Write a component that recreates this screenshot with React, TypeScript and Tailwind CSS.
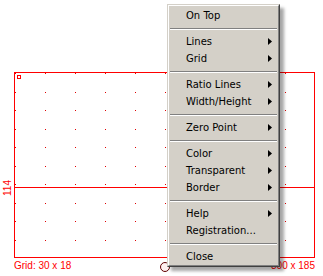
import { ReactNode } from 'react';

type MenuEntry = { label: string; sub?: boolean } | 'sep';

const menu: MenuEntry[] = [
  { label: 'On Top' },
  'sep',
  { label: 'Lines', sub: true },
  { label: 'Grid', sub: true },
  'sep',
  { label: 'Ratio Lines', sub: true },
  { label: 'Width/Height', sub: true },
  'sep',
  { label: 'Zero Point', sub: true },
  'sep',
  { label: 'Color', sub: true },
  { label: 'Transparent', sub: true },
  { label: 'Border', sub: true },
  'sep',
  { label: 'Help', sub: true },
  { label: 'Registration...' },
  'sep',
  { label: 'Close' },
];

function Arrow() {
  return (
    <svg width="4" height="7" viewBox="0 0 4 7" className="block">
      <path d="M0 0 L4 3.5 L0 7 Z" fill="#000" />
    </svg>
  );
}

function MenuItem({ label, sub }: { label: string; sub?: boolean }): ReactNode {
  return (
    <div className="h-[17px] flex items-center pl-[17px] pr-[6px]">
      <span className="flex-1 leading-none">{label}</span>
      {sub && <Arrow />}
    </div>
  );
}

function Separator() {
  return (
    <div className="h-[9px] flex flex-col justify-center px-[1px]">
      <div className="h-px bg-[#808080]" />
      <div className="h-px bg-white" />
    </div>
  );
}

function GridDots() {
  const xs = Array.from({ length: 11 }, (_, i) => 1 + i * 30);
  const ys = Array.from({ length: 10 }, (_, i) => 1 + Math.round(i * 18.5));
  return (
    <svg className="absolute left-[-1px] top-[-1px]" width="301" height="186">
      {ys.map((y) =>
        xs.map((x) => <rect key={`${x}-${y}`} x={x} y={y} width="1" height="1" fill="#e00000" />)
      )}
      <rect x="3.5" y="3.5" width="3" height="3" fill="none" stroke="#ff0000" strokeWidth="1" />
    </svg>
  );
}

export default function App() {
  return (
    <div
      className="relative w-[323px] h-[276px] bg-white overflow-hidden text-[10px]"
      style={{ fontFamily: '"Liberation Sans", Arial, sans-serif' }}
    >
      {/* canvas */}
      <div className="pl-[14px] pt-[72px]">
        <div className="relative w-[301px] h-[186px] border border-[#ff0000]">
          <GridDots />
          <div className="absolute left-0 right-0 top-[114px] h-px bg-[#ff0000]" />
          <div className="absolute left-[-13px] top-[107px] w-[12px] h-[16px] flex items-center justify-center">
            <span className="block -rotate-90 text-[#ff0000] leading-none whitespace-nowrap">114</span>
          </div>
        </div>
        <div className="flex items-center justify-between w-[301px] text-[#ff0000] leading-none mt-[3px]">
          <span>Grid: 30 x 18</span>
          <span>300 x 185</span>
        </div>
      </div>

      {/* marker circle */}
      <div className="absolute left-[160px] top-[262px] w-[10px] h-[10px] rounded-full border border-[#600000] bg-[#fff0f0]" />

      {/* context menu */}
      <div
        className="absolute left-[167px] top-[4px] w-[113px] bg-[#d4d0c8] border border-t-[#d4d0c8] border-l-[#d4d0c8] border-r-[#404040] border-b-[#404040] shadow-[4px_4px_3px_rgba(0,0,0,0.35)]"
        style={{ fontFamily: '"DejaVu Sans", Tahoma, sans-serif' }}
      >
        <div className="border border-t-white border-l-white border-r-[#808080] border-b-[#808080] pt-[1px] text-black">
          {menu.map((m, i) =>
            m === 'sep' ? <Separator key={i} /> : <MenuItem key={i} label={m.label} sub={m.sub} />
          )}
        </div>
      </div>
    </div>
  );
}
